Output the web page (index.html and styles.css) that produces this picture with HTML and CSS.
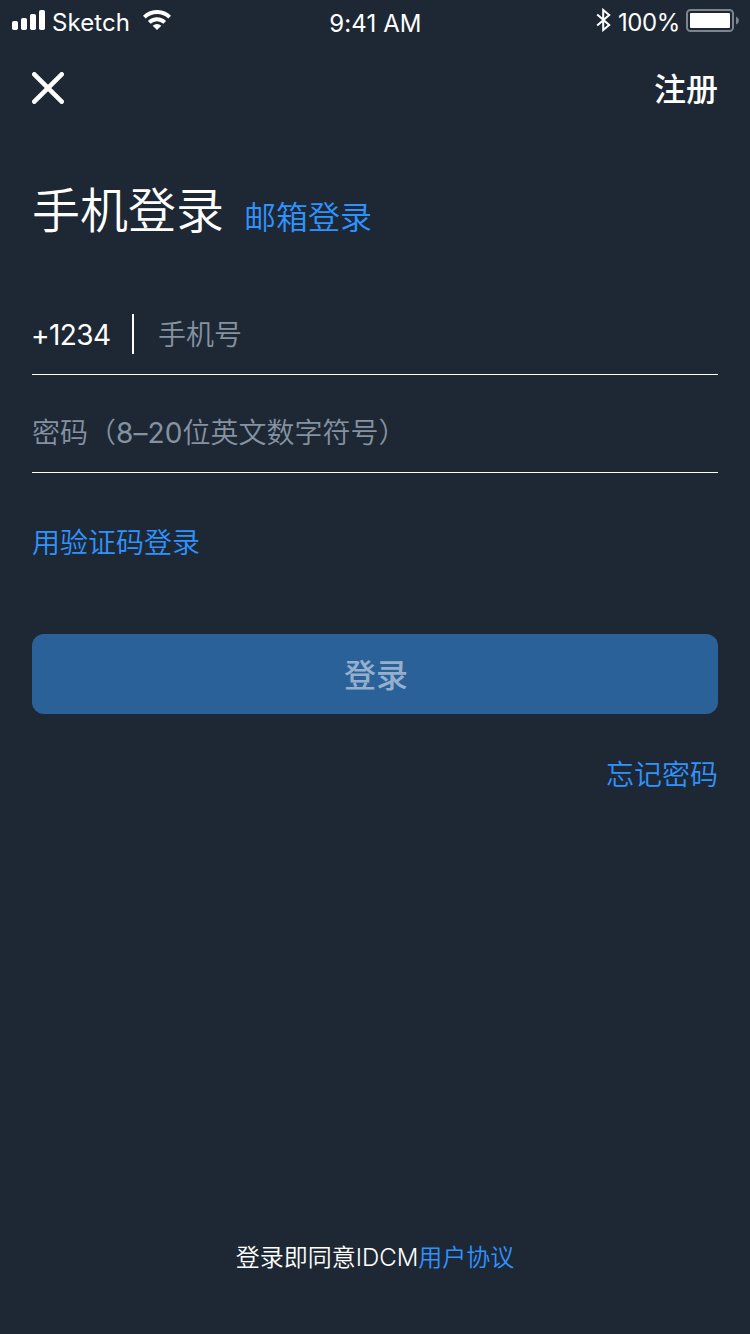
FILE: index.html
```html
<!DOCTYPE html>
<html lang="zh-CN">
<head>
<meta charset="utf-8">
<title>手机登录</title>
<link rel="stylesheet" href="styles.css">
</head>
<body>
<div class="screen">
  <header class="status">
    <div class="status-left">
      <svg class="signal" width="34" height="20" viewBox="0 0 34 20" fill="#fff"><rect x="0" y="11" width="6" height="9" rx="1.8"/><rect x="9" y="8" width="6" height="12" rx="1.8"/><rect x="18" y="4" width="6" height="16" rx="1.8"/><rect x="27" y="0" width="6" height="20" rx="1.8"/></svg>
      <span class="carrier">Sketch</span>
      <svg class="wifi" width="28" height="20" viewBox="0 0 28 20" fill="none" stroke="#fff" stroke-width="3.9"><path d="M1.3 7.1a18.2 18.2 0 0 1 25.4 0"/><path d="M6.3 12.4a11 11 0 0 1 15.4 0"/><path d="M14 20l-4.3-4.2a6.1 6.1 0 0 1 8.6 0z" fill="#fff" stroke="none"/></svg>
    </div>
    <span class="clock">9:41 AM</span>
    <div class="status-right">
      <svg class="bluetooth" width="15" height="24" viewBox="0 0 15 24" fill="none" stroke="#fff" stroke-width="2"><path d="M1.2 6.6l12 10.4-6 5V2l6 5-12 10.4"/></svg>
      <span class="percent">100%</span>
      <svg class="battery" width="53" height="23" viewBox="0 0 53 23"><rect x="1" y="1" width="46" height="21" rx="3.5" fill="none" stroke="#7d848b" stroke-width="2"/><rect x="4" y="4" width="40" height="15" rx="1" fill="#fff"/><path d="M50 7.5q3 1.3 3 4t-3 4z" fill="#7d848b"/></svg>
    </div>
  </header>
  <nav class="nav">
    <svg class="close" width="32" height="32" viewBox="0 0 32 32" fill="none" stroke="#fff" stroke-width="4.6" stroke-linecap="round"><path d="M2.3 2.3l27.4 27.4M29.7 2.3L2.3 29.7"/></svg>
    <a class="register">注册</a>
  </nav>
  <main class="content">
    <div class="tabs">
      <h1 class="tab-active">手机登录</h1>
      <a class="tab">邮箱登录</a>
    </div>
    <div class="field">
      <span class="code">+1234</span>
      <span class="divider"></span>
      <span class="hint">手机号</span>
    </div>
    <div class="field">
      <span class="hint">密码（<span class="digits">8–20</span>位英文数字符号）</span>
    </div>
    <a class="link sms">用验证码登录</a>
    <button class="submit">登录</button>
    <a class="link forgot">忘记密码</a>
  </main>
  <footer class="footer">登录即同意<span class="brand">IDCM</span><a class="terms">用户协议</a></footer>
</div>
</body>
</html>
```

FILE: styles.css
```css
* { box-sizing: border-box; }
body { margin: 0; background: #1e2834; }
.screen {
  width: 750px;
  height: 1334px;
  display: flex;
  flex-direction: column;
  background: #1e2834;
  color: #fff;
  font-family: Inter, "Noto Sans CJK SC DemiLight", "Noto Sans CJK SC", sans-serif;
  font-weight: 350;
  white-space: nowrap;
}
.status {
  height: 40px;
  display: grid;
  grid-template-columns: 1fr auto 1fr;
  padding: 0 11px 0 12px;
  font-size: 24px;
  line-height: 46px;
  font-weight: 400;
}
.status-left, .status-right { display: flex; align-items: flex-start; }
.status-right { justify-content: flex-end; }
.signal { margin-top: 10px; }
.carrier { margin-left: 6px; width: 78px; letter-spacing: 0.1px; }
.wifi { margin: 10px 0 0 13px; }
.clock { line-height: 47px; letter-spacing: 0.1px; }
.bluetooth { margin-top: 8px; }
.percent { margin: 0 6px 0 7px; letter-spacing: -0.4px; }
.battery { margin-top: 9px; }
.nav {
  height: 96px;
  padding: 0 32px;
  display: flex;
  align-items: center;
  justify-content: space-between;
}
.register {
  padding-top: 4px;
  font: 500 32px/44px Inter, "Noto Sans CJK SC", sans-serif;
}
.content { flex: 1; padding: 40px 32px 0; display: flex; flex-direction: column; }
.tabs { display: flex; align-items: flex-start; height: 118px; }
.tab-active { margin: 0; font-size: 48px; line-height: 70px; font-weight: 350; }
.tab { margin-left: 20px; padding-top: 19px; font-size: 32px; line-height: 46px; color: #2e93ff; }
.field {
  height: 81px;
  margin-bottom: 17px;
  border-bottom: 1px solid #fff;
  display: flex;
  align-items: center;
  font-size: 28px;
  line-height: 40px;
}
.divider { width: 2px; height: 40px; margin: 0 24px 0 21px; background: #fff; }
.code { width: 79px; padding-top: 1px; font-weight: 400; letter-spacing: -0.6px; text-indent: -1px; }
.hint { color: #8592a2; padding-top: 2px; }
.digits { font-weight: 400; letter-spacing: 0.1px; }
.link { font-size: 28px; line-height: 40px; color: #2e93ff; }
.sms { margin-top: 33px; }
.submit {
  height: 80px;
  margin: 71px 0 41px;
  padding: 4px 0 0 2px;
  border: 0;
  border-radius: 12px;
  background: #2b6199;
  color: #95b0cc;
  font: 500 32px/44px Inter, "Noto Sans CJK SC", sans-serif;
}
.forgot { align-self: flex-end; }
.footer { height: 93px; text-align: center; font-size: 24px; line-height: 34px; }
.terms { color: #2e93ff; }
```
